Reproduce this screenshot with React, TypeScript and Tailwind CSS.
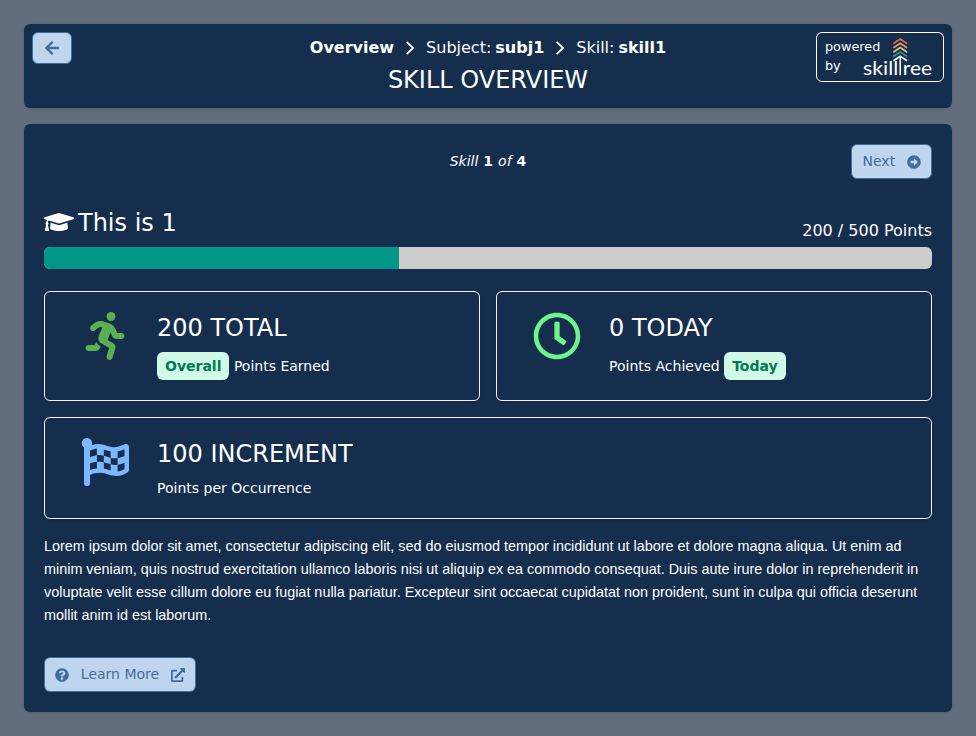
import React from 'react';
import {
  FaArrowLeft,
  FaArrowAltCircleRight,
  FaGraduationCap,
  FaRunning,
  FaRegClock,
  FaFlagCheckered,
  FaQuestionCircle,
  FaExternalLinkAlt,
} from 'react-icons/fa';

const BUTTON = 'flex items-center rounded-md border border-[#3f6d9c] bg-[#bfd5ee] text-[#3f6d9c]';

function Chevron() {
  return (
    <svg className="mx-3 h-[14px] w-2" viewBox="0 0 8 14" fill="none" stroke="white" strokeWidth="1.8">
      <path d="M0.7 0.8 7 7 0.7 13.2" />
    </svg>
  );
}

function Logo() {
  return (
    <svg className="h-[42px] w-[72px] shrink-0" viewBox="0 0 72 42" fill="none" aria-label="SkillTree">
      <g strokeWidth="1.7">
        <path d="M30.3 6.6 37.2 2 44.1 6.6" stroke="#e76f51" />
        <path d="M30.3 10.9 37.2 6.3 44.1 10.9" stroke="#f4a261" />
        <path d="M30.3 15.2 37.2 10.6 44.1 15.2" stroke="#e9c46a" />
        <path d="M30.3 19.5 37.2 14.9 44.1 19.5" stroke="#2a9d8f" />
        <path d="M30.3 23.8 37.2 19.2 44.1 23.8" stroke="white" />
        <path d="M37.2 19.5V38.2" stroke="white" strokeWidth="1.5" />
      </g>
      <g fill="white" fontFamily="Lato, sans-serif" fontSize="18.5">
        <text x="0" y="38.2" textLength="35.2" lengthAdjust="spacingAndGlyphs">skill</text>
        <text x="39.8" y="38.2" textLength="29.4" lengthAdjust="spacingAndGlyphs">ree</text>
      </g>
    </svg>
  );
}

function Card({ icon, title, children, className }: {
  icon: React.ReactNode;
  title: string;
  children: React.ReactNode;
  className: string;
}) {
  return (
    <div className={`flex rounded-md border border-[#eef2f6] pt-5 shadow-sm ${className}`}>
      <div className="flex w-[112px] shrink-0 justify-center pl-2">{icon}</div>
      <div className="text-sm">
        <div className="text-2xl leading-8">{title}</div>
        {children}
      </div>
    </div>
  );
}

export default function App() {
  return (
    <div className="flex h-[736px] w-[976px] flex-col gap-4 bg-[#626d7c] p-6 font-['DejaVu_Sans',sans-serif] text-white">
      <header className="flex h-[84px] shrink-0 items-start justify-between rounded-md bg-[#152e4d] p-2 shadow-sm">
        <div className="w-[128px]">
          <button className={`${BUTTON} h-8 w-10 justify-center`} aria-label="Back">
            <FaArrowLeft size={16} />
          </button>
        </div>
        <div className="flex flex-col items-center pt-1">
          <nav className="flex items-center text-base leading-6">
            <b>Overview</b>
            <Chevron />
            <span>Subject:</span><b className="ml-1">subj1</b>
            <Chevron />
            <span>Skill:</span><b className="ml-1">skill1</b>
          </nav>
          <h1 className="mt-1 text-2xl leading-8">SKILL OVERVIEW</h1>
        </div>
        <div className="flex h-[50px] w-[128px] rounded-md border border-white pt-1 pl-2 text-[12.8px] leading-[19.2px]">
          <div className="w-[38px] shrink-0">
            <div>powered</div>
            <div>by</div>
          </div>
          <Logo />
        </div>
      </header>

      <main className="flex h-[588px] shrink-0 flex-col rounded-md bg-[#152e4d] p-5 shadow-sm">
        <div className="grid h-[35px] grid-cols-3 items-center text-sm">
          <div className="col-start-2 flex justify-center gap-[5px] pb-0.5"><i>Skill</i><b>1</b><i>of</i><b>4</b></div>
          <button className={`${BUTTON} h-[35px] w-[81px] justify-between justify-self-end pr-2.5 pl-[10.5px]`}>
            <span className="pb-px">Next</span> <FaArrowAltCircleRight size={14} />
          </button>
        </div>

        <div className="mt-7 flex h-9 items-start justify-between">
          <h2 className="flex items-center gap-1 text-2xl leading-8">
            <FaGraduationCap className="mb-0.5 h-6 w-[30px]" />This is 1
          </h2>
          <div className="mt-3 text-base leading-6">200 / 500 Points</div>
        </div>
        <div className="mt-1 h-[22px] shrink-0 overflow-hidden rounded-md bg-[#cccccc]">
          <div className="h-full w-2/5 bg-[#009688]" />
        </div>

        <div className="mt-[22px] grid shrink-0 grid-cols-2 gap-4">
          <Card className="h-[110px]" title="200 TOTAL" icon={<FaRunning size={48} color="#5aaf51" />}>
            <div className="mt-2 flex items-center gap-[4.45px]">
              <b className="rounded-md bg-[#d0fae5] px-2 py-1 text-[#007a55]">Overall</b>
              <span>Points Earned</span>
            </div>
          </Card>
          <Card className="h-[110px]" title="0 TODAY" icon={<FaRegClock size={48} color="#6ef48c" />}>
            <div className="mt-2 flex items-center gap-[4.45px]">
              <span>Points Achieved</span>
              <b className="rounded-md bg-[#d0fae5] px-2 py-1 text-[#007a55]">Today</b>
            </div>
          </Card>
          <Card className="col-span-2 h-[102px]" title="100 INCREMENT" icon={<FaFlagCheckered size={48} color="#7bb8ff" />}>
            <div className="mt-2 leading-5">Points per Occurrence</div>
          </Card>
        </div>

        <p className="mt-4 text-[14.4px] leading-[23px] font-['Liberation_Sans',Arial,sans-serif]">
          Lorem ipsum dolor sit amet, consectetur adipiscing elit, sed do eiusmod tempor incididunt ut labore et dolore magna aliqua. Ut enim ad minim veniam, quis nostrud exercitation ullamco laboris nisi ut aliquip ex ea commodo consequat. Duis aute irure dolor in reprehenderit in voluptate velit esse cillum dolore eu fugiat nulla pariatur. Excepteur sint occaecat cupidatat non proident, sunt in culpa qui officia deserunt mollit anim id est laborum.
        </p>

        <button className={`${BUTTON} mt-[30px] h-[35px] w-[152px] shrink-0 justify-between px-2.5 text-sm`}>
          <FaQuestionCircle size={14} />
          <span className="pb-px">Learn More</span>
          <FaExternalLinkAlt size={14} />
        </button>
      </main>
    </div>
  );
}
